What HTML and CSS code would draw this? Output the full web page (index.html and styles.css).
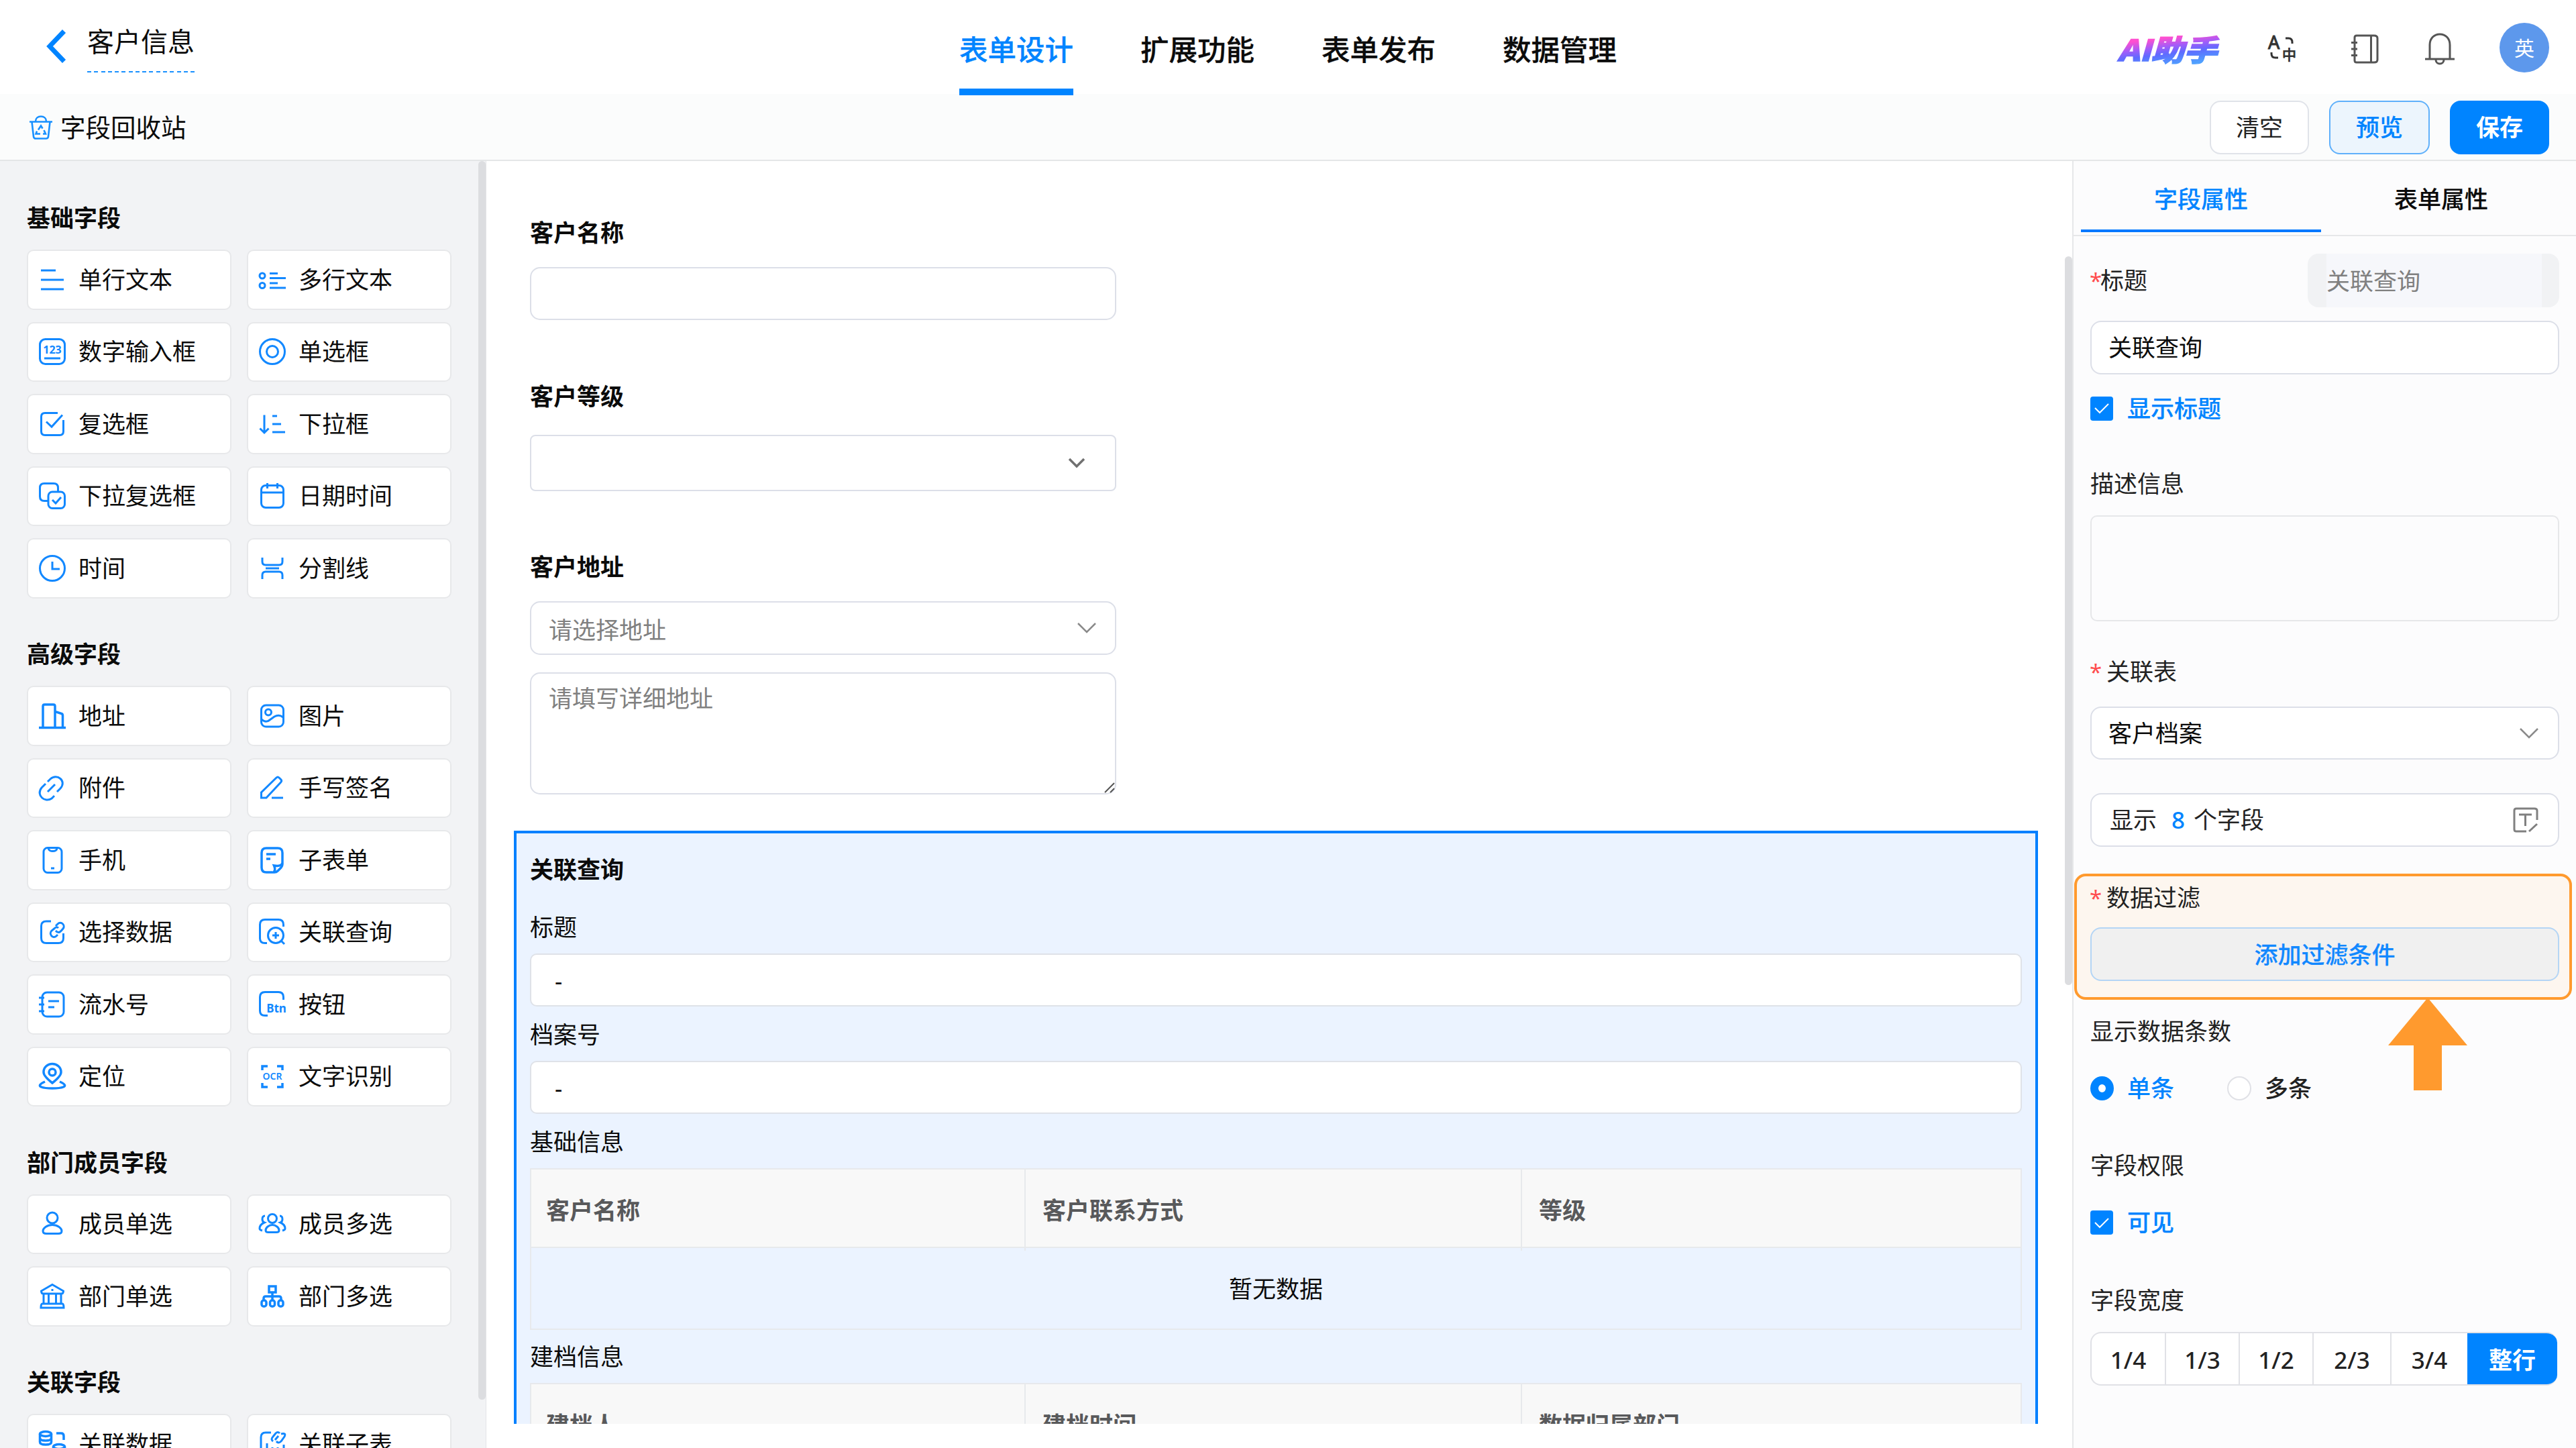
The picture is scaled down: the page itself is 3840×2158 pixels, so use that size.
FILE: index.html
```html
<!DOCTYPE html>
<html lang="zh-CN">
<head>
<meta charset="utf-8">
<title>客户信息</title>
<link rel="stylesheet" href="styles.css">
</head>
<body>
<div class="app">
  <header class="topbar">
    <div class="topbar-left">
      <svg class="back" viewBox="0 0 30 50"><path d="M26.500 2.500 5 25l21.500 22.500"/></svg>
      <h1 class="form-name">客户信息</h1>
    </div>
    <nav class="main-nav">
      <a class="nav-item active">表单设计</a>
      <a class="nav-item">扩展功能</a>
      <a class="nav-item">表单发布</a>
      <a class="nav-item">数据管理</a>
    </nav>
    <div class="topbar-right">
      <span class="ai">AI助手</span>
      <svg class="tool lang" viewBox="0 0 42 44"><text x="0" y="22" font-size="27">A</text><text x="21" y="38" font-size="21">中</text><path d="M26 6h4.500q5.500 0 5.500 6v2M5 27v2q0 6 6 6h4"/></svg>
      <svg class="tool book" viewBox="0 0 42 44"><path d="M9 2h26q5 0 5 4v32q0 4-5 4H9q-3 0-3-3V5q0-3 3-3zM30.500 2v40M1 12.500h9M1 22h9M1 31.500h9"/></svg>
      <svg class="tool bell" viewBox="0 0 46 48"><path d="M1 39h44M8 39V18C8 8 14.500 2 23 2s15 6 15 16v21M17 40c0 8 12 8 12 0"/></svg>
      <span class="avatar">英</span>
    </div>
  </header>
  <div class="toolbar">
    <div class="recycle">
      <svg class="trash" viewBox="0 0 36 36"><path d="M1 9.500h34M4.500 9.500l2.500 22q.4 3 3.400 3h15.200q3 0 3.400-3l2.500-22M10 9C10 4 13.500 1.500 18 1.500S26 4 26 9M14 21.500l4-6 2.500 4M12 23.500l-1.500 4H17M22.500 22l2.500 5.500h-4"/></svg>
      <span>字段回收站</span>
    </div>
    <div class="actions">
      <button class="btn">清空</button>
      <button class="btn btn-light">预览</button>
      <button class="btn btn-primary">保存</button>
    </div>
  </div>
  <div class="workspace">
    <aside class="palette">
      <div class="palette-body">
        <h2>基础字段</h2>
        <div class="grid">
          <div class="chip"><svg viewBox="0 0 40 40"><path d="M3 6h22M3 20h34M3 34h34"/></svg>单行文本</div>
          <div class="chip"><svg viewBox="0 0 40 40"><circle cx="5" cy="14" r="4"/><circle cx="5" cy="28.500" r="4"/><path d="M16 10.500h12M16 17.500h24M16 25h12M16 32h24"/></svg>多行文本</div>
          <div class="chip"><svg viewBox="0 0 40 40"><rect x="1.500" y="1.500" width="37" height="37" rx="8"/><path d="M8 30h24"/><text x="20" y="23" font-size="16">123</text></svg>数字输入框</div>
          <div class="chip"><svg viewBox="0 0 40 40"><circle cx="20" cy="20" r="18.500"/><circle cx="20" cy="20" r="8.500"/></svg>单选框</div>
          <div class="chip"><svg viewBox="0 0 40 40"><path d="M28 3.500H9q-5.500 0-5.500 5.500v22q0 5.500 5.500 5.500h22q5.500 0 5.500-5.500V14M11 16.500l8 7.500L35 6.500"/></svg>复选框</div>
          <div class="chip"><svg viewBox="0 0 40 40"><path d="M8 6.500v26M1.500 26.500 8 33l6.500-6.500M20 8h7M20 20h13M20 32h19"/></svg>下拉框</div>
          <div class="chip"><svg viewBox="0 0 40 40"><path d="M13 27.500H8q-6.500 0-6.500-6.500V8q0-6.500 6.500-6.500h14q6.500 0 6.500 6.500v5"/><rect x="14" y="14" width="24.500" height="24.500" rx="6"/><path d="m20 26 5 5 8-9"/></svg>下拉复选框</div>
          <div class="chip"><svg viewBox="0 0 40 40"><rect x="3.500" y="4.500" width="33" height="33" rx="6.500"/><path d="M3.500 15h33M12.500 1v8M27.500 1v8"/></svg>日期时间</div>
          <div class="chip"><svg viewBox="0 0 40 40"><circle cx="20" cy="20" r="18.500"/><path d="M20 10v11h11"/></svg>时间</div>
          <div class="chip"><svg viewBox="0 0 40 40"><path d="M5 4v6q0 5 5 5h20q5 0 5-5V4M5 36v-6q0-5 5-5h20q5 0 5 5v6M10 20h20"/></svg>分割线</div>
        </div>
        <h2>高级字段</h2>
        <div class="grid">
          <div class="chip"><svg class="bold" viewBox="0 0 40 40"><path d="M0 37.500h40M6 37V5.500q0-2.500 2.500-2.500h13Q24 3 24 5.500V37M24 14h2l7.500 2.500q2 .5 2 3V37"/></svg>地址</div>
          <div class="chip"><svg viewBox="0 0 40 40"><rect x="3.500" y="4" width="33" height="32" rx="7"/><circle cx="14" cy="14.500" r="4.500"/><path d="M4 25q6 6 12 1l7-5q7-4 13 1"/></svg>图片</div>
          <div class="chip"><svg viewBox="0 0 40 40"><path d="M13 11l4-4c10-9 25 3 15 14l-5 5M23 32l-4 4C9 43-5 31 4 20l6-6M13 26l11-11"/></svg>附件</div>
          <div class="chip"><svg viewBox="0 0 40 40"><path d="M3.500 35v-8L26 5q2-2 4 0l3 3q1.500 2-.5 4L11 35zM19 35h17"/></svg>手写签名</div>
          <div class="chip"><svg viewBox="0 0 40 40"><rect x="7" y="1.500" width="27" height="37" rx="6"/><path d="M14 2c.5 6 13 6 13 0M18 32h5"/></svg>手机</div>
          <div class="chip"><svg class="bold" viewBox="0 0 40 40"><path d="M20 38h-9q-7 0-7-7V9q0-7 7-7h17q7 0 7 7v17q0 3-2 5l-5 5q-2 2-5 2h-1.500q4-3 1-10Q33 30 35 24M11 11h14M11 18h6"/></svg>子表单</div>
          <div class="chip"><svg viewBox="0 0 40 40"><path d="M18 4h-7Q3.500 4 3.500 11v18Q3.500 36.500 11 36.500h18q7.500 0 7.500-7.500v-7"/><path d="M24 14l-5 4c-5 5 2 13 7 8l2-2M25 18c4 5 7 2 11-3 4-5-3-12-8-7l-3 3M29 14c-2-2-4-1-5 0"/></svg>选择数据</div>
          <div class="chip"><svg viewBox="0 0 40 40"><path d="M12 36.500H9q-7.500 0-7.500-7V9q0-7.500 7.500-7.500h20q7.500 0 7.500 7.500v3"/><circle cx="25" cy="25" r="11.500"/><path d="M20 25h10M25 20v10M33.500 33.500 38 38"/></svg>关联查询</div>
          <div class="chip"><svg viewBox="0 0 40 40"><rect x="5" y="2" width="32" height="36" rx="7"/><path d="M0 10h8M0 20h8M0 30h8M14 15h16M14 24h9"/></svg>流水号</div>
          <div class="chip"><svg viewBox="0 0 40 40"><path d="M13 36.500H9q-7.500 0-7.500-7V9q0-7.500 7.500-7.500h20q7.500 0 7.500 7.500v4"/><text x="26" y="32" font-size="17">Btn</text></svg>按钮</div>
          <div class="chip"><svg class="bold" viewBox="0 0 40 40"><path d="M20 30C6 19 7 14 7 13.500a13 12 0 0 1 26 0C33 14 34 19 20 30zM9 28c-18 8 0 10 11 10s29-2 11-10"/><circle cx="20" cy="14" r="5"/></svg>定位</div>
          <div class="chip"><svg class="bold" viewBox="0 0 40 40"><path d="M5 11V5h8M27 5h8v6M5 30v6h8M27 36h8v-6"/><text class="ocr" x="20" y="25" font-size="14">OCR</text></svg>文字识别</div>
        </div>
        <h2>部门成员字段</h2>
        <div class="grid">
          <div class="chip"><svg viewBox="0 0 40 40"><circle cx="20" cy="11" r="8"/><path d="M20 21.500c8 0 14 5 14 9q0 4-5 4H11q-5 0-5-4c0-4 6-9 14-9z"/></svg>成员单选</div>
          <div class="chip"><svg viewBox="0 0 40 40"><circle cx="20" cy="12" r="6.500"/><path d="M20 21.500c5 0 10 4 10 8q0 3-4 3H14q-4 0-4-3c0-4 5-8 10-8zM9 8q-4 0-4 5 0 4 3 5-7 3-7 9 0 2 4 3M31 8q4 0 4 5 0 4-3 5 7 3 7 9 0 2-4 3"/></svg>成员多选</div>
          <div class="chip"><svg viewBox="0 0 40 40"><path d="M20 2.500 36.500 12q0 4-3 4h-27q-3 0-3-4zM7 16v15M14.500 16v15M25.500 16v15M33 16v15M5 31h30q2 0 2 6H3q0-6 2-6zM20 9v3"/></svg>部门单选</div>
          <div class="chip"><svg class="bold" viewBox="0 0 40 40"><rect x="15" y="5" width="10" height="9"/><path d="M20 14v12M7 26v-3q0-3 3-3h20q3 0 3 3v3"/><rect x="4" y="26" width="7" height="9" rx="3"/><rect x="16.500" y="26" width="7" height="9" rx="3"/><rect x="29" y="26" width="7" height="9" rx="3"/></svg>部门多选</div>
        </div>
        <h2>关联字段</h2>
        <div class="grid">
          <div class="chip"><svg class="bold" viewBox="0 0 40 40"><ellipse cx="10" cy="5" rx="8.500" ry="3.500"/><path d="M1.500 5v12q0 4 8.500 4t8.500-4V5M1.500 11q0 4 8.500 4t8.500-4M26 4h7q4 0 4 4v6M5 27v5q0 3 4 3h5"/><ellipse cx="30" cy="24" rx="8.500" ry="3.500"/><path d="M21.500 24v12q0 3 8.500 3t8.500-3V24M21.500 30q0 4 8.500 4t8.500-4"/></svg>关联数据</div>
          <div class="chip"><svg viewBox="0 0 40 40"><path d="M18 3h-8q-7 0-7 7v20q0 7 7 7h20q7 0 7-7v-9M12 19v15M20 25v10M28 25v10M21 16q-4-3 0-7l4-5q3-3 6 0M29 8l-5 6M33 5q8-2 5 4l-5 7q-4 4-7 0"/></svg>关联子表</div>
        </div>
      </div>
      <div class="palette-scroll"><i></i></div>
    </aside>

    <main class="canvas">
      <div class="canvas-body">
        <section class="field">
          <label>客户名称</label>
          <div class="box"></div>
        </section>
        <section class="field field-level">
          <label>客户等级</label>
          <div class="box box-level"><svg class="arrow-strong" viewBox="0 0 26 16"><path d="m2 2 11 11L24 2"/></svg></div>
        </section>
        <section class="field">
          <label>客户地址</label>
          <div class="box box-select"><span>请选择地址</span><svg class="arrow" viewBox="0 0 28 16"><path d="m1 1 13 13L27 1"/></svg></div>
          <div class="box box-area"><span>请填写详细地址</span><svg class="grip" viewBox="0 0 16 16"><path d="M1 15 15 1M9 15l6-6"/></svg></div>
        </section>
        <section class="linked">
          <h3>关联查询</h3>
          <p>标题</p>
          <div class="value">-</div>
          <p>档案号</p>
          <div class="value">-</div>
          <p>基础信息</p>
          <div class="table">
            <div class="thead"><span>客户名称</span><span>客户联系方式</span><span>等级</span></div>
            <div class="empty">暂无数据</div>
          </div>
          <p>建档信息</p>
          <div class="table">
            <div class="thead"><span>建档人</span><span>建档时间</span><span>数据归属部门</span></div>
          </div>
        </section>
      </div>
      <div class="canvas-scroll"><i></i></div>
    </main>

    <aside class="props">
      <nav class="tabs"><a class="tab active">字段属性</a><a class="tab">表单属性</a></nav>
      <div class="props-body">
        <div class="title-row"><span class="name"><b class="star">*</b>标题</span><div class="readonly"><span>关联查询</span></div></div>
        <div class="input title-input">关联查询</div>
        <div class="check title-check"><svg class="tick" viewBox="0 0 34 36"><path d="m7 17 7 7L27 11"/></svg><span>显示标题</span></div>
        <div class="name desc-name">描述信息</div>
        <div class="desc"></div>
        <div class="name rel-name"><b class="star">*</b><span class="spaced">关联表</span></div>
        <div class="input rel-input"><span>客户档案</span><svg class="arrow" viewBox="0 0 28 16"><path d="m1 1 13 13L27 1"/></svg></div>
        <div class="input count-input"><span>显示<em>8</em>个字段</span><svg class="edit" viewBox="0 0 38 38"><path d="M20 36H5q-3 0-3-3V5q0-3 3-3h27q4 0 4 3v14M9 11h19M18.500 11v17M24 36l12-11"/></svg></div>
        <div class="filter">
          <div class="name filter-name"><b class="star">*</b><span class="spaced">数据过滤</span></div>
          <button class="filter-btn">添加过滤条件</button>
          <svg class="pointer" viewBox="0 0 118 138"><path d="M59 0l59 71H80v67H38V71H0z"/></svg>
        </div>
        <div class="name rows-name">显示数据条数</div>
        <div class="radios">
          <div class="radio on"><i></i><span>单条</span></div>
          <div class="radio"><i></i><span>多条</span></div>
        </div>
        <div class="name perm-name">字段权限</div>
        <div class="check perm-check"><svg class="tick" viewBox="0 0 34 36"><path d="m7 18 7 7 13-13"/></svg><span>可见</span></div>
        <div class="name width-name">字段宽度</div>
        <div class="widths"><span>1/4</span><span>1/3</span><span>1/2</span><span>2/3</span><span>3/4</span><span class="full">整行</span></div>
      </div>
    </aside>
  </div>
</div>
</body>
</html>
```
FILE: styles.css
```css
* { box-sizing: border-box; margin: 0; padding: 0; }
body { width: 3840px; height: 2158px; overflow: hidden; font-family: "Noto Sans", "Noto Sans CJK SC", sans-serif; font-size: 35px; line-height: 50px; color: #0b0b0b; background: #fff; }
button { font: inherit; color: inherit; }
svg { display: block; flex: none; fill: none; stroke-width: 3; overflow: visible; }
.app { height: 2158px; display: flex; flex-direction: column; }

/* Top bar */
.topbar { height: 140px; flex: none; display: grid; grid-template-columns: 1430px 1fr auto; }
.topbar-left { display: flex; align-items: flex-start; padding-left: 69px; }
.back { width: 30px; height: 50px; margin-top: 44px; stroke: #0084ff; stroke-width: 7; }
.form-name { margin: 34px 0 0 31px; height: 74px; font-size: 40px; line-height: 56px; font-weight: 400; background: repeating-linear-gradient(90deg, #1890ff 0 6px, transparent 6px 10.270px) left bottom / 100% 2px no-repeat; }
.main-nav { display: flex; gap: 100px; height: 142px; position: relative; }
.nav-item { width: 170px; font-size: 42.500px; line-height: 60px; padding-top: 44px; font-weight: 500; white-space: nowrap; border-bottom: 10px solid transparent; -webkit-text-stroke: .3px currentColor; }
.nav-item.active { color: #0084ff; border-color: #0084ff; }
.topbar-right { display: flex; align-items: center; padding-right: 40px; }
.ai { font-family: "Noto Sans CJK SC", sans-serif; font-size: 46px; line-height: 64px; font-weight: 900; font-style: italic; padding: 0 8px 0 6px; margin: 2px 68px 0 0; background: linear-gradient(172deg, #ff4fd0 30%, #a55cf8 46%, #5f6bff 60%, #4fa0ff 82%); -webkit-background-clip: text; background-clip: text; color: transparent; -webkit-text-stroke: 1.500px transparent; white-space: nowrap; transform: scale(1.070, .95); transform-origin: right center; }
.tool { stroke: #555; stroke-width: 3; }
.tool text { fill: #333; stroke: #333; stroke-width: 1; }
.lang { width: 42px; height: 44px; margin: 4px 81px 0 0; stroke: #333; }
.book { width: 42px; height: 44px; margin: 4px 68px 0 0; }
.bell { width: 46px; height: 48px; margin: 4px 66px 0 0; }
.avatar { width: 74px; height: 74px; border-radius: 50%; background: #5d98ec; color: #fff; font-size: 30px; line-height: 76px; text-align: center; }

/* Toolbar */
.toolbar { height: 100px; flex: none; display: flex; justify-content: space-between; align-items: center; padding: 0 40px 0 43px; background: #fbfcfc; border-bottom: 2px solid #e4e6e7; }
.recycle { display: flex; align-items: center; gap: 11px; font-size: 37.500px; padding-top: 1px; }
.trash { width: 36px; height: 36px; stroke: #1890ff; stroke-width: 2.600; }
.actions { display: flex; gap: 30px; padding-top: 2px; }
.btn { width: 148px; height: 80px; border: 2px solid #e0e3e9; border-radius: 16px; background: #fff; line-height: 76px; color: #222; }
.btn-light { width: 150px; background: #ecf5fd; border-color: #5fb0fb; color: #0084ff; font-weight: 500; -webkit-text-stroke: .2px currentColor; }
.btn-primary { background: #0084ff; border-color: #0084ff; color: #fff; font-weight: 700; }

.workspace { flex: 1; min-height: 0; display: grid; grid-template-columns: 725px 1fr 751px; }

/* Field palette */
.palette { display: flex; background: #f2f3f5; overflow: hidden; min-height: 0; border-right: 1px solid #e4e5e8; }
.palette-body { width: 713px; flex: none; padding: 1.500px 40px 0 40px; }
.palette h2 { font-size: 35px; font-weight: 700; line-height: 50px; margin: 58.500px 0 22px; }
.grid { display: grid; grid-template-columns: 305px 305px; column-gap: 23px; row-gap: 18px; grid-auto-rows: 89.500px; }
.chip { display: flex; align-items: center; gap: 19px; padding-left: 16px; background: #fff; border: 2px solid #e7e8ea; border-radius: 10px; white-space: nowrap; }
.chip svg { width: 40px; height: 40px; stroke: #1288ff; }
.chip svg.bold { stroke-width: 3.500; }
.chip text { fill: #1288ff; stroke: none; text-anchor: middle; font-weight: 700; }
.chip .ocr { font-weight: 600; }
.palette-scroll { width: 11px; height: 1846px; }
.palette-scroll i { display: block; height: 100%; border-radius: 6px; background: #dcdde0; }

/* Form canvas */
.canvas { display: flex; justify-content: space-between; min-height: 0; }
.canvas-body { height: 1881.500px; overflow: hidden; padding: 81.500px 0 0 41px; width: 2313px; }
.field { margin: 0 0 89px 24px; width: 874px; }
.field-level { margin-bottom: 87.500px; }
.field label { display: block; font-weight: 700; margin-bottom: 26px; }
.field-level label { margin-bottom: 32.500px; }
.field:nth-child(3) { margin-bottom: 54px; }
.box { display: flex; height: 80px; border: 2px solid #dcdfe8; border-radius: 15px; color: #808080; padding: 0 26px; justify-content: space-between; align-items: center; }
.field:first-child .box { height: 79px; }
.box-level { height: 84px; border-radius: 8px; padding-right: 44px; justify-content: flex-end; }
.box-select { padding-right: 28px; }
.box-select span { padding-top: 7px; }
.box-area { height: 182px; margin-top: 26px; align-items: flex-start; padding: 12px 0 0 26px; }
.box-area .grip { align-self: flex-end; width: 16px; height: 16px; stroke: #555; stroke-width: 2; }
.arrow { width: 28px; height: 16px; stroke: #8a8a8a; stroke-width: 2.500; }
.arrow-strong { width: 26px; height: 16px; stroke: #707070; stroke-width: 3.500; }
.linked { width: 2272px; height: 1100px; border: 4px solid #0080ff; background: #ebf3ff; padding: 29px 20px 0; }
.linked h3 { font-size: 35px; font-weight: 700; margin-bottom: 36px; }
.linked p { margin-bottom: 14px; }
.value { height: 79.500px; margin-bottom: 16.500px; border: 2px solid #dfe2e8; border-radius: 10px; background: #fff; padding-left: 35px; line-height: 78px; }
.table { border: 2px solid #e7e9ec; margin: 1px 0 15px; }
.thead { display: grid; grid-template-columns: 735px 740px 1fr; height: 117px; background: #f8f8f8; border-bottom: 2px solid #e7e9ec; color: #58595b; font-weight: 700; }
.thead span { line-height: 121px; padding-left: 22px; }
.thead span + span { border-left: 2px solid #e7e9ec; padding-left: 25px; }
.empty { height: 120px; line-height: 122px; text-align: center; }
.canvas-scroll { width: 11px; padding-top: 142px; }
.canvas-scroll i { display: block; height: 1086px; border-radius: 6px; background: #dcdde0; }

/* Property panel */
.props { background: #fcfcfd; border-left: 2px solid #e6e7e9; display: flex; flex-direction: column; }
.tabs { display: grid; grid-template-columns: 358px 358px; height: 112px; padding-left: 11px; border-bottom: 2px solid #e6e7e9; }
.tab { height: 106px; line-height: 114px; text-align: center; font-weight: 500; -webkit-text-stroke: .2px currentColor; border-bottom: 4px solid transparent; }
.tab.active { color: #0084ff; border-color: #0078ff; }
.props-body { padding: 26px 25px 0; color: #222; }
.name { height: 50px; }
.star { color: #ff4d4f; font-weight: 400; font-size: 33px; display: inline-block; width: 15px; line-height: 40px; margin-left: -1px; margin-right: 1px; }
.spaced { padding-left: 9px; }
.title-row { display: flex; justify-content: space-between; align-items: center; height: 80px; }
.readonly { width: 375px; height: 80px; border-radius: 16px; background: #f1f2f4; padding: 0 26px 0 28px; color: #808080; line-height: 81px; }
.readonly span { display: block; height: 80px; background: #f6f7fb; }
.input { display: flex; justify-content: space-between; align-items: center; height: 80px; border: 2px solid #dcdfe8; border-radius: 16px; background: #fff; padding: 0 29px 0 25px; color: #0b0b0b; }
.title-input { margin-top: 20px; font-weight: 400; }
.check { display: flex; align-items: center; gap: 21px; color: #0084ff; font-weight: 500; height: 36px; -webkit-text-stroke: .2px currentColor; }
.tick { width: 34px; height: 36px; background: #0084ff; border-radius: 4px; stroke: #fff; stroke-width: 2; }
.title-check { margin-top: 33px; }
.desc-name { margin-top: 69px; }
.desc { height: 158px; margin-top: 22px; border: 2px solid #e6e7e9; border-radius: 10px; }
.rel-name { margin-top: 50px; }
.rel-input { margin-top: 27px; height: 79px; }
.count-input { margin-top: 50px; padding-left: 27px; color: #222; }
.count-input em { font-style: normal; font-weight: 500; color: #0084ff; margin: 0 13px 0 22px; }
.edit { width: 38px; height: 38px; stroke: #808080; }
.filter { position: relative; margin: 40px -19px 0 -24px; height: 188px; padding: 7px 15px 0 20px; border: 4px solid #ff9a2e; border-radius: 17px; background: #fdf6ef; }
.filter-btn { display: block; width: 100%; height: 80px; margin-top: 19px; border: 2px solid #b4d5f5; border-radius: 16px; background: #f0f0f0; color: #1288ff; font-weight: 500; line-height: 78px; -webkit-text-stroke: .2px currentColor; }
.pointer { position: absolute; left: 464px; top: 181px; width: 118px; height: 138px; fill: #ff9a2e; }
.rows-name { margin-top: 22px; }
.radios { display: flex; gap: 79px; margin-top: 35px; }
.radio { display: flex; align-items: center; gap: 20px; font-weight: 500; }
.radio i { width: 36px; height: 36px; border: 2px solid #e0e1e6; border-radius: 50%; background: #fff; }
.radio.on { color: #0084ff; }
.radio.on i { width: 35px; border: 12px solid #0084ff; }
.perm-name { margin-top: 65px; }
.perm-check { margin-top: 42px; }
.width-name { margin-top: 73px; }
.widths { display: grid; grid-template-columns: 109px 110px 110px 116px 115px 134px; width: 696px; height: 80px; margin-top: 22px; border: 2px solid #e0e1e6; border-right: 0; border-radius: 16px; background: #fff; text-align: center; line-height: 79px; font-weight: 500; overflow: hidden; }
.widths span + span { border-left: 2px solid #e0e1e6; }
.widths .full { margin: -2px 0; line-height: 83px; border: 0; background: #0084ff; color: #fff; font-weight: 700; }
```
